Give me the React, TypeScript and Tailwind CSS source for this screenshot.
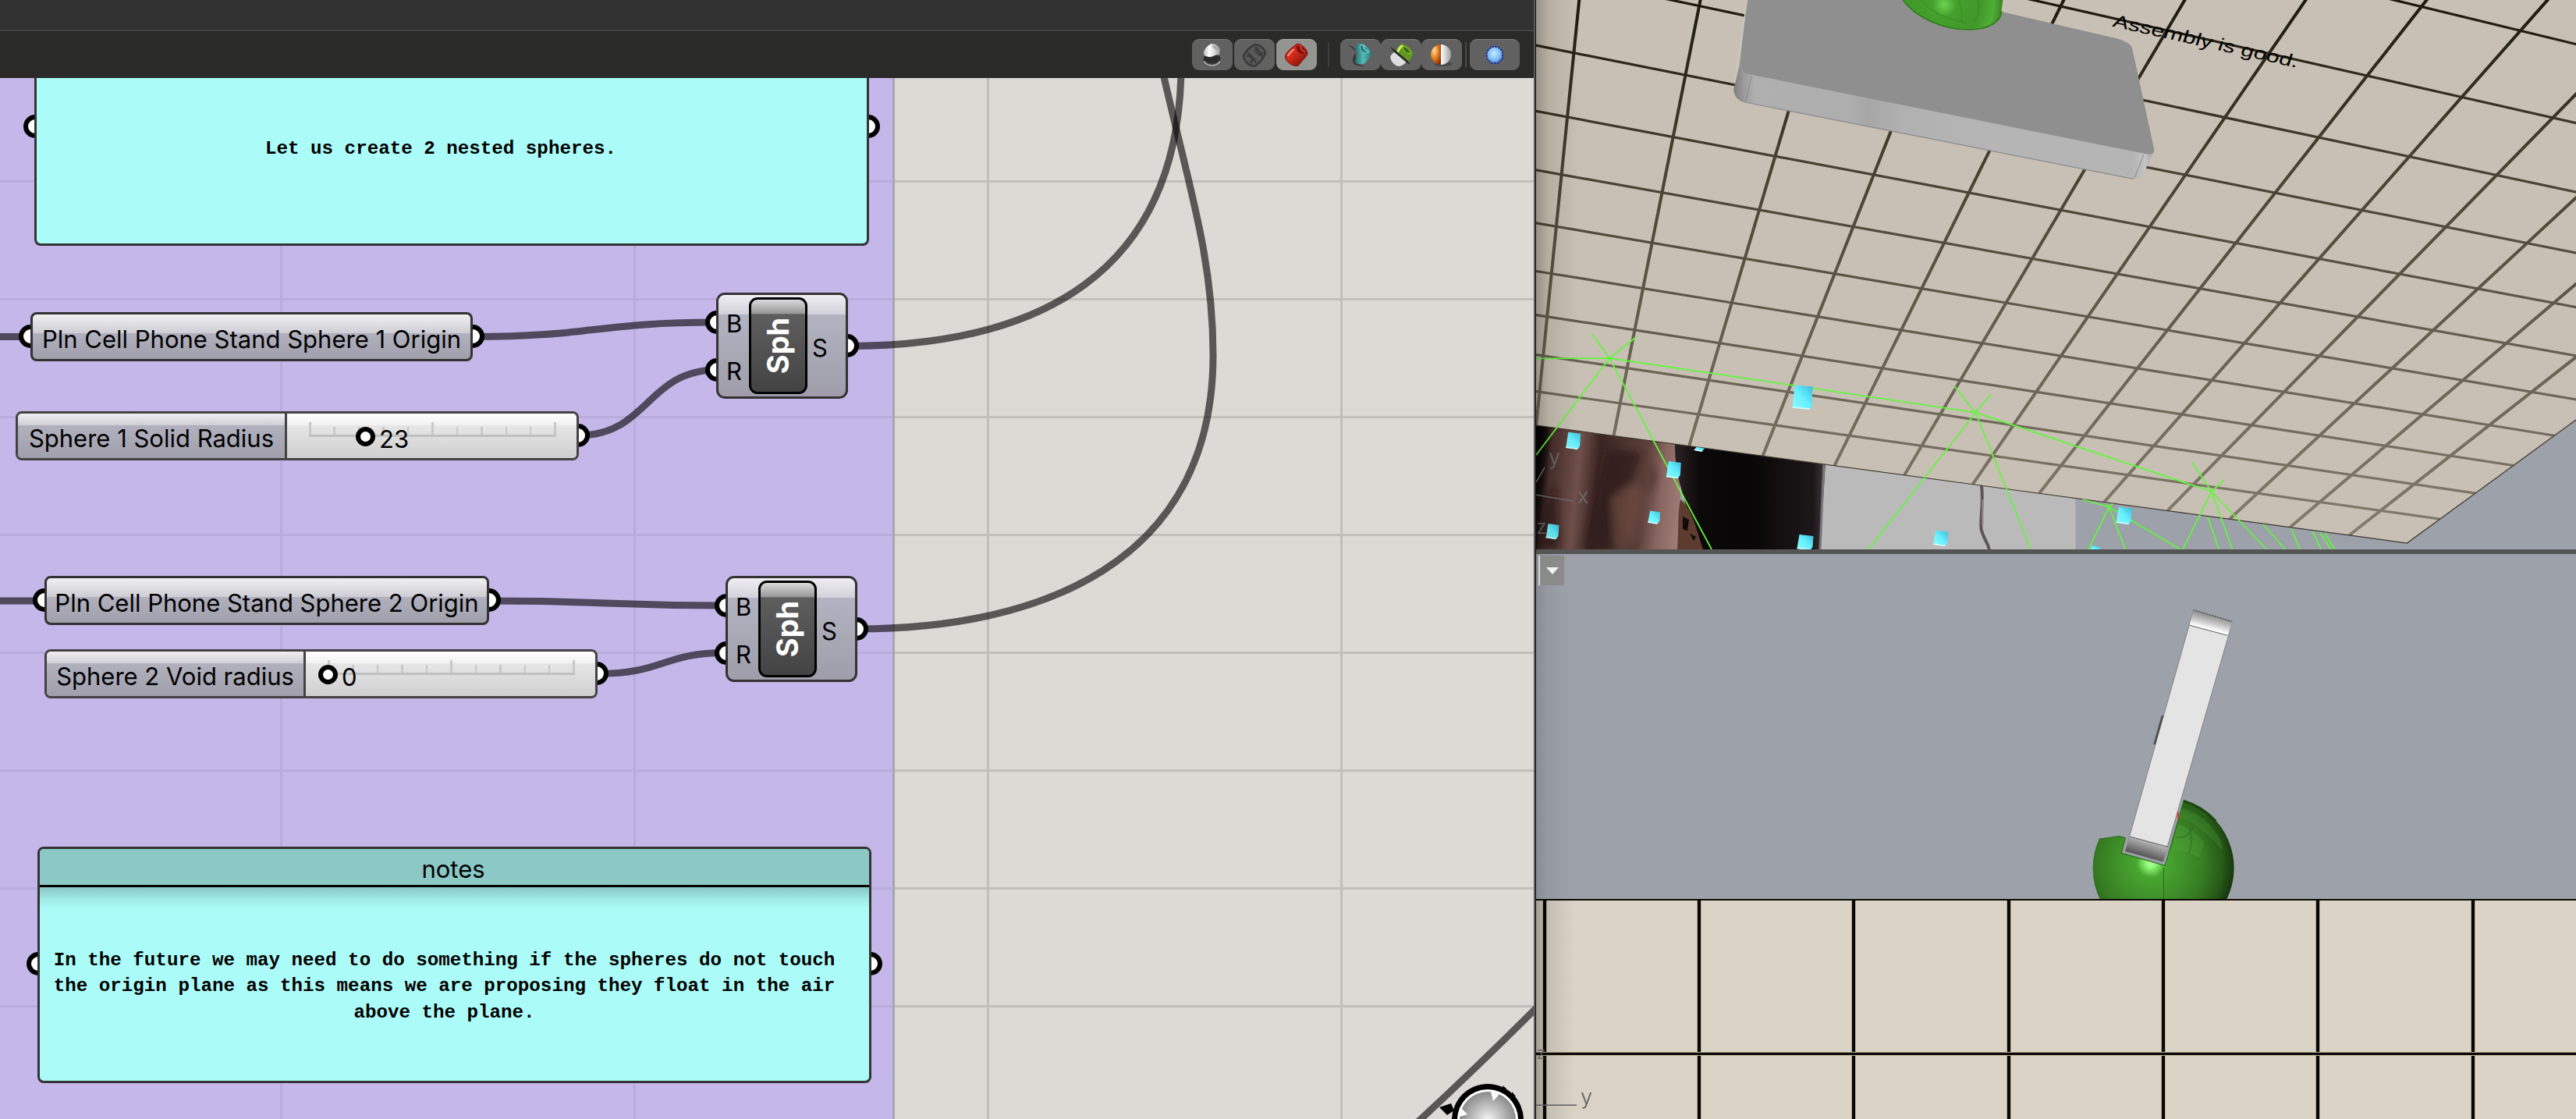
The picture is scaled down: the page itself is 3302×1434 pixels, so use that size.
import React from "react";

type Pt = [number, number];

/* Solves for the 8 coefficients of the plane-to-screen projection. */
function solveProjection(src: Pt[], dst: Pt[]): number[] {
  const m: number[][] = [];
  src.forEach(([a, b], i) => {
    const [x, y] = dst[i];
    m.push([a, b, 1, 0, 0, 0, -a * x, -b * x, x]);
    m.push([0, 0, 0, a, b, 1, -a * y, -b * y, y]);
  });
  for (let c = 0; c < 8; c++) {
    let p = c;
    for (let r = c + 1; r < 8; r++) if (Math.abs(m[r][c]) > Math.abs(m[p][c])) p = r;
    [m[c], m[p]] = [m[p], m[c]];
    for (let r = 0; r < 8; r++) {
      if (r === c) continue;
      const f = m[r][c] / m[c][c];
      for (let k = c; k < 9; k++) m[r][k] -= f * m[c][k];
    }
  }
  return m.map((row, i) => row[8] / row[i]);
}

const H = solveProjection(
  [[0, 0], [0, 5], [8, -3], [13, 8]],
  [[2017.4, 67.7], [1983.2, 405.7], [3230.8, 39.3], [3085.3, 696]],
);
const project = (a: number, b: number): Pt => {
  const w = H[6] * a + H[7] * b + 1;
  return [(H[0] * a + H[1] * b + H[2]) / w, (H[3] * a + H[4] * b + H[5]) / w];
};

const columns = Array.from({ length: 13 }, (_, a) => [project(a, -5), project(a, 8)]);
const rows = Array.from({ length: 12 }, (_, i) => [project(-0.6, i - 4), project(13, i - 4)]);

const wireRays: number[][] = [
  [2063, 459, 1969, 459.3], [2063, 459, 2040.4, 427.7], [2063, 459, 2097.5, 431.7],
  [2063, 459, 1969, 583.3], [2063, 459, 2194, 704], [2063, 459, 2532.3, 528.7],
  [2532.3, 528.7, 2504.6, 494.3], [2532.3, 528.7, 2552, 505.7], [2532.3, 528.7, 2395.2, 704],
  [2532.3, 528.7, 2603.3, 704], [2532.3, 528.7, 2835, 630], [2835, 630, 2809.5, 592],
  [2835, 630, 2851.2, 614.3], [2835, 630, 2797.9, 704], [2835, 630, 2861.5, 704],
  [2835, 630, 2905.3, 704], [2703.4, 650, 2669.4, 640], [2703.4, 650, 2700, 645],
  [2703.4, 650, 2708, 645.5], [2703.4, 650, 2677, 704], [2703.4, 650, 2724.5, 704],
  [2703.4, 650, 2794.7, 704], [2830.1, 662.7, 2844.4, 704], [2900.9, 672, 2929.5, 704],
  [2936.7, 677.3, 2948.3, 704], [2964.4, 681, 2975.2, 704], [2973.4, 682, 2987.7, 704],
  [2980.1, 683, 2992.6, 704],
];

const markers: number[][] = [
  [2310.6, 509, 26, 31], [2016.7, 564.7, 19, 22], [1990, 681, 17, 20], [2145.3, 602, 19, 22],
  [2178.7, 575.7, 14, 6], [2120.3, 663, 16, 17], [2314, 695, 21, 20], [2487.7, 689.7, 19, 20],
  [2722.7, 660.7, 20, 22], [2686, 703, 14, 8],
];

function PerspectiveView() {
  return (
    <svg className="block h-[704px] w-full" viewBox="1969 0 1333 704" preserveAspectRatio="none">
      <defs>
        <linearGradient id="gridInk" gradientUnits="userSpaceOnUse" x1="0" y1="0" x2="0" y2="700">
          <stop offset="0" stopColor="#1c180c" />
          <stop offset="0.3" stopColor="#45402f" />
          <stop offset="0.65" stopColor="#676152" />
          <stop offset="1" stopColor="#857d6e" />
        </linearGradient>
        <linearGradient id="edgeShade" x1="0" y1="0" x2="1" y2="0">
          <stop offset="0" stopColor="#000" stopOpacity="0.24" />
          <stop offset="0.3" stopColor="#000" stopOpacity="0.09" />
          <stop offset="1" stopColor="#000" stopOpacity="0" />
        </linearGradient>
        <linearGradient id="skin" gradientUnits="userSpaceOnUse" x1="1969" y1="620" x2="2160" y2="640">
          <stop offset="0" stopColor="#050303" />
          <stop offset="0.04" stopColor="#1c1211" />
          <stop offset="0.08" stopColor="#4a312d" />
          <stop offset="0.27" stopColor="#70504a" />
          <stop offset="0.4" stopColor="#3a2522" />
          <stop offset="0.55" stopColor="#4a332d" />
          <stop offset="0.72" stopColor="#5b403b" />
          <stop offset="0.84" stopColor="#8a6661" />
          <stop offset="1" stopColor="#a3807b" />
        </linearGradient>
        <linearGradient id="cloth" gradientUnits="userSpaceOnUse" x1="2146" y1="0" x2="2337" y2="0">
          <stop offset="0" stopColor="#2c2224" />
          <stop offset="0.18" stopColor="#0b0809" />
          <stop offset="0.5" stopColor="#080606" />
          <stop offset="0.75" stopColor="#151011" />
          <stop offset="0.93" stopColor="#1d1719" />
          <stop offset="1" stopColor="#3a3336" />
        </linearGradient>
        <linearGradient id="slabFront" gradientUnits="userSpaceOnUse" x1="2222" y1="0" x2="2761" y2="0">
          <stop offset="0" stopColor="#7d7d7d" />
          <stop offset="0.025" stopColor="#9b9b9b" />
          <stop offset="0.05" stopColor="#b0b0b0" />
          <stop offset="0.28" stopColor="#aeaeae" />
          <stop offset="0.32" stopColor="#a6a6a6" />
          <stop offset="0.4" stopColor="#b1b1b1" />
          <stop offset="0.6" stopColor="#b5b5b5" />
          <stop offset="0.95" stopColor="#b5b5b5" />
          <stop offset="0.98" stopColor="#c4c4c4" />
          <stop offset="1" stopColor="#a2a2a2" />
        </linearGradient>
        <radialGradient id="greenTop" gradientUnits="userSpaceOnUse" cx="2492" cy="6" r="75">
          <stop offset="0" stopColor="#6ed552" />
          <stop offset="0.2" stopColor="#46a02d" />
          <stop offset="0.6" stopColor="#3f9828" />
          <stop offset="0.85" stopColor="#4fae37" />
          <stop offset="1" stopColor="#37851f" />
        </radialGradient>
        <linearGradient id="cube" x1="0" y1="1" x2="1" y2="0">
          <stop offset="0" stopColor="#8ffcff" />
          <stop offset="0.5" stopColor="#66f0ff" />
          <stop offset="1" stopColor="#3bb9d8" />
        </linearGradient>
        <clipPath id="floorClip">
          <path d="M1969 0H3302V538L3085.3 696L1969 545Z" />
        </clipPath>
        <filter id="soft"><feGaussianBlur stdDeviation="5" /></filter>
      </defs>
      <rect x="1969" y="0" width="1333" height="704" fill="#9ca1aa" />
      <path d="M2336 590H2660.5V704H2332Z" fill="#bababa" />
      <path d="M1969 540L2150 565L2158 704H1969Z" fill="url(#skin)" />
      <g filter="url(#soft)">
        <path d="M2060 575L2105 580L2075 660L2095 704H2030Z" fill="#2e1b18" opacity="0.75" />
        <path d="M2065 640C2085 620 2100 610 2108 640L2090 704H2070Z" fill="#6d4a40" opacity="0.7" />
        <path d="M1976 650L1995 620L2000 704H1970Z" fill="#2a1917" opacity="0.6" />
        <path d="M2115 590L2125 610L2112 640Z" fill="#4b2f2b" opacity="0.7" />
      </g>
      <path d="M2147 560L2340 592L2333 704H2182C2170 668 2160 650 2158 636C2150 610 2146 590 2147 560Z" fill="url(#cloth)" />
      <path d="M2154 640C2170 652 2178 690 2183 704H2150C2152 680 2150 660 2154 640Z" fill="#5d3b2f" />
      <path d="M2157 662l8 4l-2 14l-6 -2zM2166 684l8 4l-3 5z" fill="#120a08" />
      <path d="M2338 592L2333 704" stroke="#77747a" strokeWidth="3" />
      <path d="M2540 622C2543 650 2537 670 2540 680C2543 690 2547 694 2550 704" stroke="#5f5558" strokeWidth="4" fill="none" />
      <path d="M2541.5 640V672" stroke="#9a8d90" strokeWidth="2" />

      <g clipPath="url(#floorClip)">
        <rect x="1969" y="0" width="1333" height="704" fill="#c8c0b4" />
        <g stroke="url(#gridInk)" strokeWidth="3.2">
          {rows.map(([p, q], i) => (
            <line key={i} x1={p[0]} y1={p[1]} x2={q[0]} y2={q[1]} />
          ))}
        </g>
        <g stroke="url(#gridInk)" strokeWidth="4">
          {columns.map(([p, q], i) => (
            <line key={i} x1={p[0]} y1={p[1]} x2={q[0]} y2={q[1]} />
          ))}
        </g>
      </g>
      <path d="M1969 545L3085.3 696L3302 538" fill="none" stroke="#3d3930" strokeWidth="1.2" />

      <path d="M2229.8 83.3L2235.5 92.3L2755 198L2761.3 191.7L2746.4 226Q2744 230 2735 229.3L2237.2 131Q2222 127 2222.3 114Z" fill="url(#slabFront)" />
      <path d="M2239.5 0H2501L2712 49Q2731 54 2733.2 62L2761.3 191.7Q2762 199 2752 197.5L2244 95.5Q2236 94 2235 92L2229.8 83.3Z" fill="#8f8f8f" />
      <path d="M2239.5 0L2224 105" stroke="#c9c9c9" strokeWidth="1.5" />
      <path d="M2224 119Q2226 128 2237.2 131L2735 229.3" stroke="#8a8a8c" strokeWidth="1.2" fill="none" />
      <path d="M2245 97L2238 130M2230 98L2226 120M2748 198L2736 228" stroke="#8a8a8c" strokeWidth="1" />
      <path d="M2439.3 0C2455 22 2490 38 2522.5 38C2552 38 2566 26 2565.6 14L2567.3 0Z" fill="url(#greenTop)" />
      <path d="M2439.3 0C2455 22 2490 38 2522.5 38C2552 38 2566 26 2565.6 14" fill="none" stroke="#2d7a1a" strokeWidth="1.5" />
      <path d="M2462 0C2474 14 2492 24 2520 29M2510 0C2516 12 2516 22 2514 28M2536 0C2538 12 2536 22 2530 28" fill="none" stroke="#338a20" strokeWidth="1" />

      <g stroke="#64f53f" strokeWidth="1.8">
        {wireRays.map(([x1, y1, x2, y2], i) => (
          <line key={i} x1={x1} y1={y1} x2={x2} y2={y2} />
        ))}
      </g>
      {markers.map(([x, y, w, h], i) => (
        <g key={i}>
          <path d={`M${x - w / 2 + 3} ${y - h / 2}L${x + w / 2} ${y - h / 2 + 2}L${x + w / 2 - 1} ${y + h / 2 - 4}L${x + w / 2 - 4} ${y + h / 2}L${x - w / 2} ${y + h / 2 - 2}Z`} fill="url(#cube)" />
          <path d={`M${x - w / 2} ${y + h / 2 - 2.5}L${x + w / 2 - 4} ${y + h / 2 - 0.5}`} stroke="#d8ffff" strokeWidth="1.5" />
        </g>
      ))}

      <g stroke="#6d6c6c" strokeWidth="1.5">
        <path d="M1969 634.3L2016.7 642M1969 618L1980 599" />
      </g>
      <g fill="#6d6c6c" fontFamily="Inter, 'Liberation Sans', sans-serif" fontSize="27" fontWeight="300">
        <text x="1985" y="595">y</text>
        <text x="2022" y="645">x</text>
        <text x="1969.5" y="684" fontSize="24">z</text>
      </g>
      <text
        transform="matrix(0.976 0.22 -0.24 0.72 2707 33.5)"
        fontFamily="'Liberation Sans', Arial, sans-serif"
        fontSize="29.9"
        fill="#000"
      >
        Assembly is good.
      </text>
      <rect x="1969" y="0" width="54" height="704" fill="url(#edgeShade)" />
    </svg>
  );
}

function SideView() {
  return (
    <svg className="block h-[724px] w-full" viewBox="1969 710 1333 724" preserveAspectRatio="none">
      <defs>
        <linearGradient id="edgeShade2" x1="0" y1="0" x2="1" y2="0">
          <stop offset="0" stopColor="#000" stopOpacity="0.26" />
          <stop offset="0.3" stopColor="#000" stopOpacity="0.1" />
          <stop offset="1" stopColor="#000" stopOpacity="0" />
        </linearGradient>
        <radialGradient id="ball" gradientUnits="userSpaceOnUse" cx="2757" cy="1106" r="108">
          <stop offset="0" stopColor="#b4ffa0" />
          <stop offset="0.06" stopColor="#8cf775" />
          <stop offset="0.17" stopColor="#48a72f" />
          <stop offset="0.4" stopColor="#40922a" />
          <stop offset="0.65" stopColor="#357a22" />
          <stop offset="0.85" stopColor="#275a18" />
          <stop offset="1" stopColor="#16340e" />
        </radialGradient>
        <linearGradient id="capTop" gradientUnits="userSpaceOnUse" x1="2836" y1="788" x2="2831" y2="808">
          <stop offset="0" stopColor="#8b8b8b" />
          <stop offset="0.5" stopColor="#c6c6c6" />
          <stop offset="0.9" stopColor="#fff" />
        </linearGradient>
        <linearGradient id="capBottom" gradientUnits="userSpaceOnUse" x1="2755" y1="1079" x2="2749" y2="1098">
          <stop offset="0" stopColor="#b5b5b5" />
          <stop offset="1" stopColor="#555" />
        </linearGradient>
      </defs>
      <rect x="1969" y="710" width="1333" height="443" fill="#9ca1aa" />
      <path d="M2690.7 1075.3L2716.7 1071.7L2724.3 1074L2719.3 1093L2775.3 1109.3L2799.3 1025.3A91 91 0 0 1 2854 1153H2692A91 91 0 0 1 2690.7 1075.3Z" fill="url(#ball)" />
      <path d="M2690.7 1075.3L2716.7 1071.7L2724.3 1074L2719.3 1093L2775.3 1109.3L2799.3 1025.3" fill="none" stroke="#2f6b1f" strokeWidth="1.2" />
      <path d="M2799.3 1026.5A90 90 0 0 1 2840 1052" fill="none" stroke="#1a4710" strokeWidth="3" />
      <path d="M2796 1036Q2822 1042 2836 1062Q2848 1074 2849 1090Q2836 1074 2818 1060Q2806 1050 2793 1048ZM2791 1056Q2806 1058 2826 1080L2819 1099Q2802 1090 2785 1088Z" fill="#6cc957" opacity="0.16" />
      <path d="M2790 1073Q2804 1076 2812 1058M2806 1094Q2812 1076 2806 1060" fill="none" stroke="#2a6a1a" strokeWidth="2" opacity="0.5" />
      <path d="M2773.5 1112V1153" stroke="#2b6b1b" strokeWidth="1" />
      <path d="M2792 1040V1050" stroke="#e83a2a" strokeWidth="2" />
      <path d="M2811.7 781.7L2861.7 796.7L2772.7 1104.3L2724.3 1090.7Z" fill="#e4e4e4" stroke="#808082" strokeWidth="1" />
      <path d="M2811.7 781.7L2861.7 796.7L2855.3 814.3L2806.7 801.3Z" fill="url(#capTop)" />
      <path d="M2730 1072L2779 1085.3L2772.7 1104.3L2724.3 1090.7Z" fill="url(#capBottom)" />
      <path d="M2806.7 801.3L2855.3 814.3M2730 1072L2779 1085.3" stroke="#5c5c5c" strokeWidth="1" />
      <path d="M2811.7 781.7L2861.7 796.7" stroke="#444" strokeWidth="1.2" strokeDasharray="2 1.5" />
      <path d="M2772 917L2761.5 954" stroke="#4b4b4b" strokeWidth="2.4" fill="none" />

      <rect x="1969" y="1153" width="1333" height="281" fill="#dbd3c6" />
      <rect x="1969" y="1152" width="1333" height="2" fill="#0c0a06" />
      {[1980, 2178, 2376, 2575, 2773, 2971, 3170].map((x) => (
        <g key={x}>
          <rect x={x - 3} y="1154" width="6" height="280" fill="#b7b195" />
          <rect x={x - 2} y="1154" width="4" height="280" fill="#060503" />
        </g>
      ))}
      <rect x="1969" y="1348" width="1333" height="5" fill="#b7b195" />
      <rect x="1969" y="1349" width="1333" height="3" fill="#060503" />
      <rect x="1969" y="1153" width="50" height="281" fill="url(#edgeShade2)" />
      <rect x="1969" y="710" width="44" height="443" fill="url(#edgeShade2)" opacity="0.5" />
      <rect x="1969" y="1415.5" width="52" height="1.5" fill="#5f5f60" />
      <g fill="#5f5f60" fontFamily="Inter, 'Liberation Sans', sans-serif" fontSize="27" fontWeight="300">
        <text x="2026" y="1415">y</text>
        <text x="1969.5" y="1357" fontSize="22">z</text>
      </g>
    </svg>
  );
}

/* ---------- toolbar ---------- */

function Tool({ children, width = "w-[52px]", active = false }: { children: React.ReactNode; width?: string; active?: boolean }) {
  return (
    <div
      className={`${width} flex h-10 items-center justify-center rounded-[9px] border-t ${
        active ? "border-[#adadaa] bg-[#949491]" : "border-[#7b7b7b] bg-[#616161]"
      }`}
    >
      <svg width="32" height="32" viewBox="0 0 32 32">{children}</svg>
    </div>
  );
}

function Toolbar() {
  return (
    <div className="flex h-[60px] items-center bg-[#2a2a28] pl-[1528px]">
      <div className="flex gap-0.5">
        <Tool>
          <defs>
            <linearGradient id="t1" x1="0" x2="1"><stop offset="0" stopColor="#b5b5b5" /><stop offset=".35" stopColor="#fff" /><stop offset=".7" stopColor="#d4d4d4" /><stop offset="1" stopColor="#999" /></linearGradient>
          </defs>
          <path d="M3 21Q5 30 15 30.5Q25 30 28 21L24 24H8Z" fill="#444" />
          <path d="M5 23.500Q9 29 15.500 29Q22 29 26 23.500" fill="none" stroke="#b9b9b9" strokeWidth="1.500" />
          <ellipse cx="15.500" cy="20" rx="11" ry="6" fill="#2b2b2b" />
          <path d="M4.500 13Q6 5 15 1Q22 1 26 8L25 15Q21 15 17 17Q13 19 8 17Q5 16 4.500 13Z" fill="url(#t1)" />
          <path d="M15 2Q17 8 25 11Q26 5 15 2Z" fill="#a5a5a5" />
        </Tool>
        <Tool>
          <path d="M17 2Q28 4 30 13Q26 24 16 30Q4 28 2 17Q6 7 17 2Z" fill="#585858" stroke="#3a3a3a" strokeWidth="2.5" />
          <path d="M17 5Q26 14 26 18M7 13Q17 20 18 26M20 6Q15 9 21 14Q25 17 26 12M6 17Q12 16 13 22Q13 26 10 24" fill="none" stroke="#3a3a3a" strokeWidth="2.2" />
        </Tool>
        <Tool active>
          <defs>
            <linearGradient id="t3" x1="0" x2="1" y1="0" y2="1"><stop offset="0.1" stopColor="#b3160c" /><stop offset=".4" stopColor="#d62b1b" /><stop offset="1" stopColor="#6d0d06" /></linearGradient>
          </defs>
          <path d="M16 1.500Q20 0 25 5Q30 9 30 14Q29 17 24 22L18 29Q14 31 8 27Q1 22 1.500 17Q2 13 8 8Z" fill="url(#t3)" stroke="#6b1510" strokeWidth="1" />
          <path d="M5 16Q8 12 12 8.500" stroke="#f58b7d" strokeWidth="2.500" strokeLinecap="round" fill="none" />
          <path d="M16 4Q15 9 19 12.500Q24 15 28 13Q27 7 21 4Q18 3 16 4Z" fill="#7b110a" />
          <path d="M21 4Q21 9 27 12" stroke="#d8392a" strokeWidth="2" fill="none" />
        </Tool>
      </div>
      <div className="ml-[14px] mr-[14px] h-8 w-0.5 bg-[#3d3d3d]" />
      <div className="flex">
        <Tool>
          <defs>
            <linearGradient id="t4" x1="0" x2="1"><stop offset="0" stopColor="#1f6f70" /><stop offset=".5" stopColor="#56b9b8" /><stop offset="1" stopColor="#1f7c7e" /></linearGradient>
          </defs>
          <path d="M1 3Q9 4 10 12Q3 20 8 28L22 31Q15 27 11 27L9 10Z" fill="#2b2b2b" opacity=".75" />
          <path d="M12 2Q17 -1 22 3Q29 9 30 14Q28 19 23 25Q19 29 11 26Q7 24 11 18Q14 12 9 7Z" fill="url(#t4)" />
          <path d="M15 4Q15 10 19 12Q23 14 27 12Q26 7 21 4Q17 2 15 4Z" fill="#247475" stroke="#8ce0de" strokeWidth=".8" />
          <path d="M20 4Q20 9 26 11" stroke="#5ccfcd" strokeWidth="2" fill="none" />
        </Tool>
        <Tool>
          <path d="M2 18Q4 13 9 11L23 23Q20 29 13 30Q4 28 2 18Z" fill="#dedede" />
          <path d="M9 12Q10 4 17 1Q28 4 31 13Q31 18 25 24Z" fill="#62971f" />
          <path d="M12 11Q14 6 17 4" stroke="#c5f073" strokeWidth="3" strokeLinecap="round" />
          <path d="M18 4Q18 13 28 14Q27 6 18 4Z" fill="#3d6a12" stroke="#a4d65a" strokeWidth=".8" />
          <path d="M3 6L10 11L24 23L27 27L21 23L8 12Z" fill="#262626" stroke="#262626" strokeWidth="1" />
        </Tool>
        <Tool>
          <defs>
            <radialGradient id="t6" cx=".35" cy=".3" r=".8"><stop offset="0" stopColor="#ffdca0" /><stop offset=".45" stopColor="#e58a25" /><stop offset="1" stopColor="#8c2a05" /></radialGradient>
            <linearGradient id="t6b" x1="0" x2="1"><stop offset="0" stopColor="#fff" /><stop offset="1" stopColor="#a0a0a0" /></linearGradient>
          </defs>
          <ellipse cx="18" cy="27" rx="12" ry="3" fill="#333" opacity=".5" />
          <path d="M15 2A13 13 0 0 0 15 28Z" fill="url(#t6)" />
          <path d="M15 2A13 13 0 0 1 15 28Z" fill="url(#t6b)" />
        </Tool>
      </div>
      <div className="mx-1 h-8 w-0.5 bg-[#4a4a4a]" />
      <Tool width="w-[64px]">
        <defs>
          <radialGradient id="t7" cx=".45" cy=".4" r=".6"><stop offset="0" stopColor="#c3ecff" /><stop offset=".7" stopColor="#78baf2" /><stop offset="1" stopColor="#4d7fd0" /></radialGradient>
        </defs>
        <path d="M12 5H20L26 11V20L20 26H12L6 20V11Z" fill="url(#t7)" stroke="#29348c" strokeWidth="1.8" strokeLinejoin="round" strokeDasharray="3 1" />
      </Tool>
    </div>
  );
}

/* ---------- graph nodes ---------- */

function Grip({ className }: { className: string }) {
  return <div className={`absolute size-[30px] rounded-full border-[6px] border-black bg-white ${className}`} />;
}

const capsule =
  "relative flex h-full w-full items-center overflow-hidden rounded-[8px] border-[3px] border-[#333333] text-black";

function ParamNode({ place, label }: { place: string; label: string }) {
  return (
    <div className={`absolute h-[63px] ${place}`}>
      <Grip className="left-[-15px] top-4" />
      <Grip className="right-[-15px] top-4" />
      <div className={`${capsule} justify-center bg-[linear-gradient(180deg,#f0f0f2_0%,#cecdd4_42%,#b1b1be_42%,#a09fab_100%)] pt-[7px]`}>
        <span className="whitespace-nowrap text-[31px] leading-10">{label}</span>
      </div>
    </div>
  );
}

function SliderNode({ place, nameWidth, name, value, knob }: { place: string; nameWidth: string; name: string; value: string; knob: string }) {
  return (
    <div className={`absolute h-[63px] ${place}`}>
      <Grip className="right-[-14px] top-4" />
      <div className={`${capsule} border-[#434343]`}>
        <div className={`${nameWidth} flex h-full shrink-0 items-center justify-center border-r-[3px] border-[#434343] bg-[linear-gradient(180deg,#f0f0f2_0%,#cecdd4_27%,#b1b1be_27%,#a09fab_100%)] pt-1.5`}>
          <span className="whitespace-nowrap text-[31px] leading-10">{name}</span>
        </div>
        <div className="relative h-full grow bg-[linear-gradient(180deg,#ffffff_0%,#f1f1f1_26%,#e6e6e6_27%,#cfcfcf_100%)]">
          <div className="ml-[28px] mt-[11px] flex h-[19px] w-[317px] items-end justify-between border-b-[3px] border-[#c0c0c0]">
            {Array.from({ length: 11 }, (_, i) => (
              <div key={i} className={`w-[2.5px] bg-[#c8c8c8] ${i % 5 === 0 ? "h-4" : "h-2.5"}`} />
            ))}
          </div>
          <div className={`absolute top-[13px] flex items-center ${knob}`}>
            <div className="size-[25px] rounded-full border-[6px] border-black bg-white" />
            <span className="ml-[5px] mt-[7px] h-[25px] text-[31px] leading-[25px]">{value}</span>
          </div>
        </div>
      </div>
    </div>
  );
}

function SphereNode({ place }: { place: string }) {
  return (
    <div className={`absolute h-[136px] w-[169px] ${place}`}>
      <Grip className="left-[-14px] top-[23px]" />
      <Grip className="left-[-14px] top-[84px]" />
      <Grip className="right-[-14px] top-[53px]" />
      <div className={`${capsule} rounded-[11px] bg-[linear-gradient(180deg,#f0eef4_0%,#d2d1d9_19%,#b3b3c1_19%,#9e9da9_100%)] text-[31px]`}>
        <div className="flex h-full w-[39px] flex-col items-end justify-center gap-[25px] pr-[9px] pt-[5px] leading-9">
          <span className="w-5 text-center">B</span>
          <span className="w-5 text-center">R</span>
        </div>
        <div className="flex h-[124px] w-[75px] items-center justify-center rounded-[11px] border-[3px] border-black bg-[linear-gradient(180deg,#dadada_0%,#989898_15%,#5e5e5e_16%,#434343_100%)]">
          <span className="-rotate-90 text-[38px] font-bold leading-none text-white">Sph</span>
        </div>
        <span className="ml-[6px] mt-1.5">S</span>
      </div>
    </div>
  );
}

function Canvas() {
  return (
    <div className="relative h-[1334px] overflow-hidden bg-[#dcdad4]">
      <svg className="absolute inset-0" width="1966" height="1334" viewBox="0 100 1966 1334">
        <rect x="0" y="100" width="1145" height="1334" fill="#c5b7e9" />
        {[232, 383, 534, 685, 836, 987, 1138, 1289].map((y) => (
          <g key={y}>
            <rect x="0" y={y - 1} width="1144" height="3" fill="#baaddd" />
            <rect x="1147" y={y - 1} width="819" height="3" fill="#c0bfb9" />
          </g>
        ))}
        {[360, 813].map((x) => <rect key={x} x={x - 1} y="100" width="3" height="1334" fill="#baaddd" />)}
        {[1266, 1719].map((x) => <rect key={x} x={x - 1} y="100" width="3" height="1334" fill="#c0bfb9" />)}
        <rect x="1144" y="100" width="3" height="1334" fill="#a9a5b0" />
        <g fill="none" stroke="#000" strokeOpacity="0.6" strokeWidth="9">
          <path d="M0 431.5H30" />
          <path d="M0 770H48" />
          <path d="M606 431.5C760 431.5 765 413 919 413" />
          <path d="M742 558C830 558 830 474 919 474" />
          <path d="M626 770C778 770 778 776 930 776" />
          <path d="M766 863.5C850 863.5 850 836.5 930 836.5" />
          <path d="M1086 443.5C1330 443.5 1510 352 1514 90" />
          <path d="M1098 806C1330 806 1555 724 1555 455C1555 330 1524 240 1490 90" />
          <path d="M1972 1289Q1893 1368 1815 1440" />
        </g>
        <defs>
          <radialGradient id="dial"><stop offset="0" stopColor="#f4f4f4" /><stop offset="1" stopColor="#8b8b8b" /></radialGradient>
        </defs>
        <path d="M1845 1419l15 -5l4 9l-9 6z" fill="#000" />
        <circle cx="1907" cy="1435" r="46" fill="#000" />
        <circle cx="1907" cy="1435" r="39" fill="#fff" />
        <circle cx="1907" cy="1435" r="36" fill="url(#dial)" />
        <path d="M1911 1399l11 3l-8 9zM1873 1420l8 8l-10 3z" fill="#fff" />
        <path d="M1926 1391l5 4l-3 5zM1938 1399l5 6l-5 2z" fill="#000" />
      </svg>

      <div className="absolute left-[44px] top-[-100px] h-[315px] w-[1070px]">
        <Grip className="left-[-14px] top-[147px]" />
        <Grip className="right-[-14px] top-[147px]" />
        <div className="relative flex h-full w-full items-end justify-center rounded-[8px] border-[3px] border-[#333333] bg-[#abfcf8] pb-[105px] pr-[28px] font-['Liberation_Mono','Courier_New',monospace] text-[24.2px] font-bold leading-[33px]">
          Let us create 2 nested spheres.
        </div>
      </div>

      <ParamNode place="left-[39px] top-[300px] w-[567px]" label="Pln Cell Phone Stand Sphere 1 Origin" />
      <SliderNode place="left-[20px] top-[427px] w-[722px]" nameWidth="w-[345px]" name="Sphere 1 Solid Radius" value="23" knob="left-[88px]" />
      <SphereNode place="left-[918px] top-[275px]" />
      <ParamNode place="left-[57px] top-[638px] w-[570px]" label="Pln Cell Phone Stand Sphere 2 Origin" />
      <SliderNode place="left-[57px] top-[732px] w-[709px]" nameWidth="w-[332px]" name="Sphere 2 Void radius" value="0" knob="left-[16px]" />
      <SphereNode place="left-[930px] top-[638px]" />

      <div className="absolute left-[48px] top-[985px] h-[303px] w-[1069px]">
        <Grip className="left-[-14px] top-[135px]" />
        <Grip className="right-[-14px] top-[135px]" />
        <div className="relative flex h-full w-full flex-col overflow-hidden rounded-[8px] border-[3px] border-[#333333] bg-[#abfcf8]">
          <div className="flex h-[49px] shrink-0 items-center justify-center border-b-[3px] border-black bg-[#8bc8c6] pr-[3px] pt-[7px] text-[31px]">notes</div>
          <div className="h-7 shrink-0 bg-[linear-gradient(180deg,#8ac7c5_0%,#a0eae6_55%,#abfcf8_100%)]" />
          <p className="mt-[49px] whitespace-pre pr-[26px] text-center font-['Liberation_Mono','Courier_New',monospace] text-[24.2px] font-bold leading-[33.3px]">
            {"In the future we may need to do something if the spheres do not touch\nthe origin plane as this means we are proposing they float in the air\nabove the plane."}
          </p>
        </div>
      </div>
    </div>
  );
}

export default function App() {
  return (
    <div className="flex h-[1434px] w-[3302px] overflow-hidden bg-[#2a2a28] font-[Inter,'Liberation_Sans',sans-serif]">
      <div className="w-[1966px] shrink-0">
        <div className="h-10 border-b-2 border-[#434343] bg-[#323232]" />
        <Toolbar />
        <Canvas />
      </div>
      <div className="w-[3px] shrink-0 border-r border-[#111] bg-[#5a5a5a]" />
      <div className="flex w-[1333px] shrink-0 flex-col">
        <PerspectiveView />
        <div className="h-1.5 bg-[#555555]" />
        <div className="relative">
          <SideView />
          <div className="absolute left-[3px] top-0.5 flex h-[38px] w-[33px] items-center justify-center border-l-2 border-[#d8d8d8] bg-[#8a8a89]">
            <svg width="16" height="9" viewBox="0 0 16 9"><path d="M0 0H16L8 9Z" fill="#f2f2f2" /></svg>
          </div>
        </div>
      </div>
    </div>
  );
}
